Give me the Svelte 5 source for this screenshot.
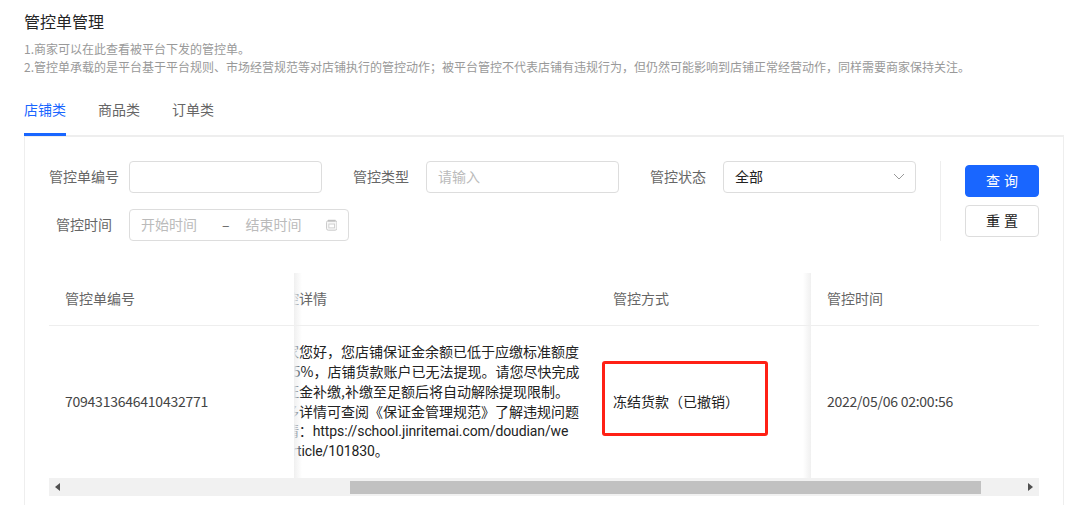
<script>
  const detailLines = [
    "商家您好，您店铺保证金余额已低于应缴标准额度",
    "的25%，店铺货款账户已无法提现。请您尽快完成",
    "保证金补缴,补缴至足额后将自动解除提现限制。",
    "更多详情可查阅《保证金管理规范》了解违规问题",
    "详情：https://school.jinritemai.com/doudian/we",
    "b/article/101830。"
  ];
  const tabs = ["店铺类", "商品类", "订单类"];
  let active = $state(0);
</script>

<div class="page">
  <h1>管控单管理</h1>
  <p class="desc">1.商家可以在此查看被平台下发的管控单。</p>
  <p class="desc">2.管控单承载的是平台基于平台规则、市场经营规范等对店铺执行的管控动作；被平台管控不代表店铺有违规行为，但仍然可能影响到店铺正常经营动作，同样需要商家保持关注。</p>

  <div class="tabs">
    {#each tabs as tab, i}
      <button class="tab" class:active={active === i} onclick={() => (active = i)}>{tab}</button>
    {/each}
  </div>

  <div class="card">
    <div class="filter">
      <div class="fields">
        <div class="row">
          <div class="field">
            <span class="label">管控单编号</span>
            <div class="input"></div>
          </div>
          <div class="field">
            <span class="label">管控类型</span>
            <div class="input placeholder">请输入</div>
          </div>
          <div class="field">
            <span class="label">管控状态</span>
            <div class="input select">
              全部
              <svg width="12" height="8" viewBox="0 0 12 8"><path d="M1 1l5 5 5-5" fill="none" stroke="#999" stroke-width="1"/></svg>
            </div>
          </div>
        </div>
        <div class="row">
          <div class="field">
            <span class="label">管控时间</span>
            <div class="input date placeholder">
              <span>开始时间</span>
              <span class="dash">–</span>
              <span>结束时间</span>
              <svg width="12" height="12" viewBox="0 0 12 12">
                <rect x="0.5" y="1.5" width="11" height="10" rx="2" fill="#f7f7f7" stroke="#c8c8c8"/>
                <path d="M2 0.5h8v2H2z" fill="#c0c0c0"/>
                <rect x="3" y="5" width="6" height="4" fill="#fff" stroke="#d0d0d0"/>
              </svg>
            </div>
          </div>
        </div>
      </div>
      <div class="actions">
        <button class="btn primary">查 询</button>
        <button class="btn">重 置</button>
      </div>
    </div>

    <div class="table">
      <div class="cols">
        <div class="col fixed-left">
          <div class="th">管控单编号</div>
          <div class="td num">7094313646410432771</div>
        </div>
        <div class="scroll">
          <div class="scroll-inner">
            <div class="col detail">
              <div class="th">管控详情</div>
              <div class="td dark">
                <div>
                  {#each detailLines as line, i}
                    <div class="line" class:latin={i >= 4}>{line}</div>
                  {/each}
                </div>
              </div>
            </div>
            <div class="col method">
              <div class="th">管控方式</div>
              <div class="td dark">冻结货款（已撤销）</div>
              <div class="redbox"></div>
            </div>
          </div>
        </div>
        <div class="col fixed-right">
          <div class="th">管控时间</div>
          <div class="td num">2022/05/06 02:00:56</div>
        </div>
      </div>
      <div class="scrollbar">
        <span class="arrow"><svg width="5" height="8" viewBox="0 0 5 8"><path d="M5 0v8L0 4z" fill="#505050"/></svg></span>
        <div class="track"><div class="thumb"></div></div>
        <span class="arrow"><svg width="5" height="8" viewBox="0 0 5 8"><path d="M0 0v8l5-4z" fill="#505050"/></svg></span>
      </div>
    </div>
  </div>
</div>

<style>
  :global(body) {
    overflow: hidden;
    background: #fff;
  }
  .page {
    padding: 9px 8px 0 24px;
    font-family: "Noto Sans CJK SC", sans-serif;
    font-size: 14px;
    line-height: 20px;
    color: #333;
  }
  h1 {
    margin: 0 0 7px;
    font-size: 16px;
    font-weight: 400;
    line-height: 24px;
    color: #252525;
  }
  .desc {
    margin: 0;
    font-size: 12px;
    line-height: 18px;
    color: #999;
  }
  .tabs {
    display: flex;
    gap: 32px;
    margin-top: 23px;
    border-bottom: 2px solid #eee;
  }
  .tab {
    margin: 0 0 -1px;
    padding: 0 0 14px;
    border: 0;
    border-bottom: 3px solid transparent;
    background: none;
    font: inherit;
    color: #666;
  }
  .tab.active {
    color: #1966ff;
    border-bottom-color: #1966ff;
  }
  .card {
    padding: 24px 24px 24px;
    border: 1px solid #eee;
    border-top: 0;
  }
  .filter {
    display: flex;
    margin-left: -5px;
  }
  .fields {
    display: flex;
    flex-direction: column;
    gap: 16px;
    padding-right: 24px;
    border-right: 1px solid #eee;
  }
  .row {
    display: flex;
    gap: 19px;
  }
  .field {
    display: flex;
    align-items: center;
    gap: 5px;
  }
  .label {
    width: 80px;
    padding-bottom: 2px;
    text-align: center;
    color: #666;
  }
  .input {
    box-sizing: border-box;
    display: flex;
    align-items: center;
    width: 193px;
    height: 32px;
    padding: 0 11px 2px;
    border: 1px solid #ddd;
    border-radius: 4px;
    white-space: nowrap;
  }
  .placeholder {
    color: #bbb;
  }
  .select {
    justify-content: space-between;
    color: #222;
  }
  .date {
    width: 220px;
  }
  .dash {
    width: 8px;
    margin: 0 16px 0 25px;
    color: #666;
  }
  .date svg {
    margin: 2px 0 0 24px;
  }
  .select svg {
    margin: 2px -1px 0 0;
  }
  .actions {
    display: flex;
    flex-direction: column;
    justify-content: center;
    gap: 8px;
    margin-left: 24px;
  }
  .btn {
    width: 74px;
    height: 32px;
    padding: 0 0 2px;
    border: 1px solid #ddd;
    border-radius: 4px;
    background: #fff;
    font: inherit;
    word-spacing: 1px;
    color: #222;
  }
  .btn.primary {
    border-color: #1966ff;
    background: #1966ff;
    color: #fff;
  }
  .table {
    margin-top: 32px;
  }
  .cols {
    display: flex;
  }
  .col {
    display: flex;
    flex-direction: column;
    background: #fff;
  }
  .th {
    box-sizing: border-box;
    height: 53px;
    padding: 0 0 2px 16px;
    display: flex;
    align-items: center;
    border-bottom: 1px solid #eee;
    color: #666;
    white-space: nowrap;
  }
  .td {
    box-sizing: border-box;
    height: 152px;
    padding: 0 0 2px 16px;
    display: flex;
    align-items: center;
    white-space: nowrap;
  }
  .dark {
    color: #222;
  }
  .num {
    letter-spacing: -0.24px;
    color: #444;
  }
  .latin {
    font-family: Roboto, "Noto Sans CJK SC", sans-serif;
    letter-spacing: -0.1px;
  }
  .fixed-left {
    position: relative;
    z-index: 1;
    width: 245px;
    flex: none;
  }
  .fixed-left::after {
    content: "";
    position: absolute;
    top: 0;
    bottom: 0;
    left: 100%;
    width: 8px;
    background: linear-gradient(to right, #f0f0f0, rgba(255, 255, 255, 0));
  }
  .fixed-right {
    position: relative;
    z-index: 1;
    width: 228px;
    flex: none;
  }
  .fixed-right::before {
    content: "";
    position: absolute;
    top: 0;
    bottom: 0;
    right: 100%;
    width: 8px;
    background: linear-gradient(to left, #f0f0f0, rgba(255, 255, 255, 0));
  }
  .scroll {
    flex: 1;
    min-width: 0;
    overflow: hidden;
  }
  .scroll-inner {
    display: flex;
    margin-left: -39px;
  }
  .detail {
    width: 342px;
    flex: none;
  }
  .method {
    position: relative;
    flex: 1;
  }
  .redbox {
    position: absolute;
    left: 5px;
    top: 88px;
    width: 166px;
    height: 75px;
    box-sizing: border-box;
    border: 3px solid #ff2015;
    border-radius: 3px;
  }
  .scrollbar {
    display: flex;
    align-items: center;
    height: 18px;
    background: #f1f1f1;
  }
  .arrow {
    width: 17px;
    flex: none;
    display: flex;
    justify-content: center;
    align-items: center;
  }
  .track {
    flex: 1;
  }
  .thumb {
    width: 631px;
    height: 13px;
    margin-left: 284px;
    background: #c1c1c1;
  }
</style>
